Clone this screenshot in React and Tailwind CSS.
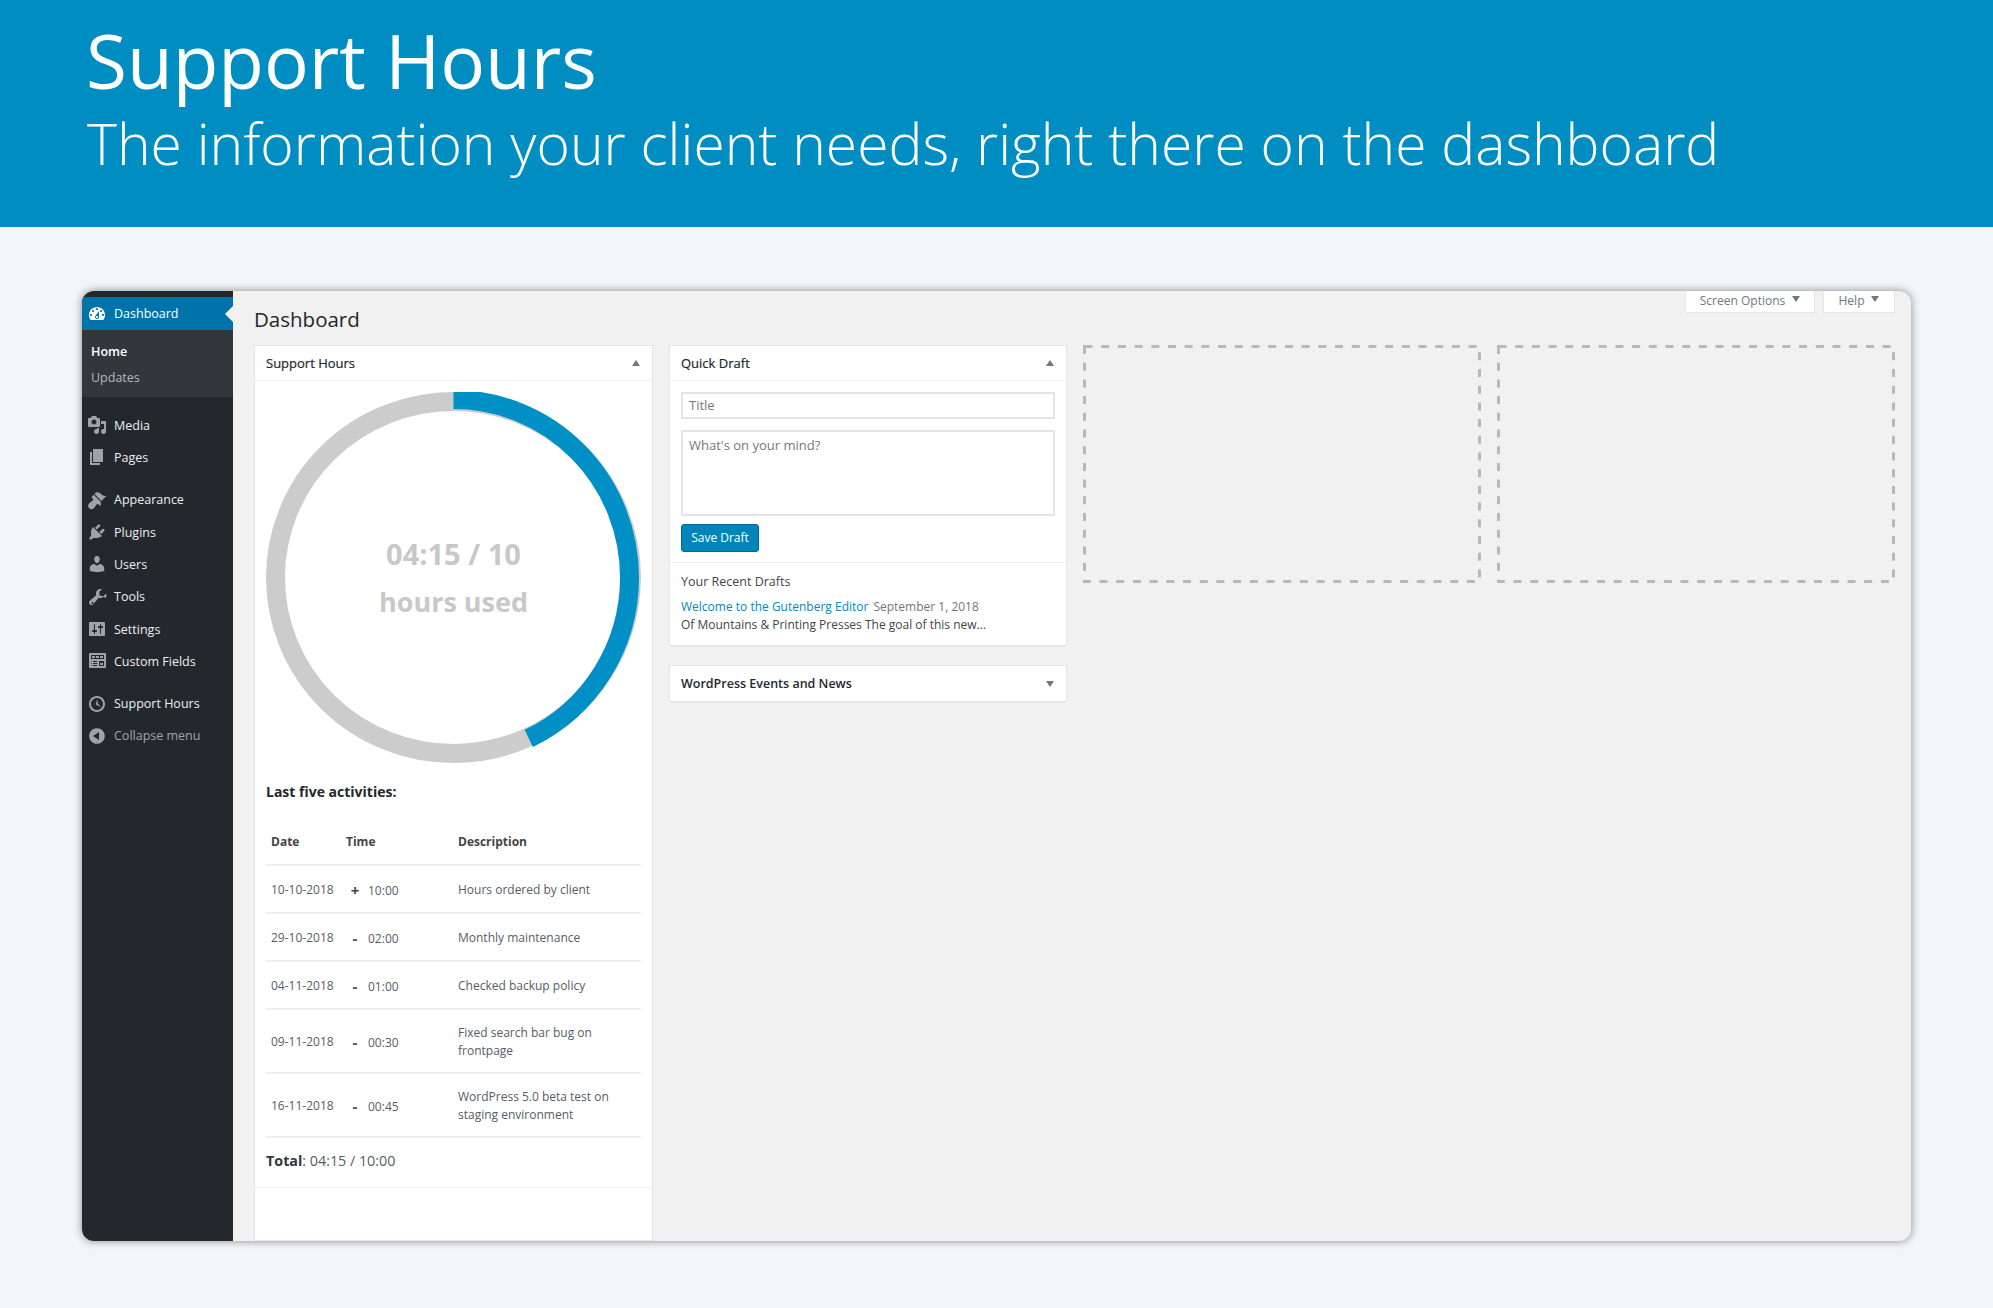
import React from 'react';

const menuIcons = {
    dashboard: 'M3.76 16h12.48c1.1-1.37 1.76-3.11 1.76-5 0-4.420-3.580-8-8-8s-8 3.580-8 8c0 1.890.66 3.630 1.760 5zM10 4c.55 0 1 .45 1 1s-.45 1-1 1-1-.45-1-1 .45-1 1-1zM6 6c.55 0 1 .45 1 1s-.45 1-1 1-1-.45-1-1 .45-1 1-1zm8 0c.55 0 1 .45 1 1s-.45 1-1 1-1-.45-1-1 .45-1 1-1zm-5.370 5.550L12 7v6c0 1.100-.9 2-2 2s-2-.9-2-2c0-.57.24-1.080.63-1.450zM4 10c.55 0 1 .45 1 1s-.45 1-1 1-1-.45-1-1 .45-1 1-1zm12 0c.55 0 1 .45 1 1s-.45 1-1 1-1-.45-1-1 .45-1 1-1zm-5 3c0-.55-.45-1-1-1s-1 .45-1 1 .45 1 1 1 1-.45 1-1z',
    media: 'M13 11V4c0-.55-.45-1-1-1h-1.670L9 1H5L3.670 3H2c-.55 0-1 .45-1 1v7c0 .55.45 1 1 1h10c.55 0 1-.45 1-1zM7 4.500c1.380 0 2.500 1.120 2.500 2.500S8.380 9.500 7 9.500 4.500 8.380 4.500 7 5.620 4.500 7 4.500zM14 6h5v10.500c0 1.380-1.120 2.500-2.500 2.500S14 17.880 14 16.500s1.120-2.500 2.500-2.500c.17 0 .34.020.5.050V9h-3V6zm-4 8.050V13h2v3.500c0 1.380-1.120 2.500-2.500 2.500S7 17.880 7 16.500 8.120 14 9.500 14c.17 0 .34.020.5.050z',
    pages: 'M6 15V2h10v13H6zm-1 1h8v2H3V5h2v11z',
    appearance: 'M14.480 11.060L7.410 3.990l1.500-1.500c.5-.56 2.300-.47 3.510.32 1.210.8 1.430 1.280 2.910 2.100 1.180.64 2.450 1.260 4.230.91zm-.71.710L6.700 4.700 4.930 6.470c-.39.390-.39 1.020 0 1.410l1.060 1.060c.39.390.39 1.030 0 1.420-.6.600-1.430 1.150-2.210 1.750-.59.450-1.190.9-1.700 1.400-1.290 1.290-1.290 3.390 0 4.680 1.290 1.290 3.390 1.290 4.680 0 .5-.51.950-1.110 1.400-1.700.6-.78 1.150-1.610 1.750-2.210.39-.39 1.030-.39 1.420 0l1.060 1.060c.39.390 1.020.39 1.410 0z',
    plugins: 'M13.110 4.360L9.870 7.600 8 5.730l3.240-3.240c.35-.34 1.050-.2 1.560.32.52.51.66 1.210.31 1.550zm-8 1.770l.91-1.120 9.010 9.010-1.190.84c-.71.710-2.630 1.160-3.820 1.160H6.140L4.900 17.260c-.59.59-1.540.59-2.120 0-.59-.58-.59-1.530 0-2.120l1.240-1.240v-3.880c0-1.130.4-3.190 1.090-3.890zm7.260 3.970l3.240-3.240c.34-.35 1.040-.21 1.550.31.52.51.66 1.210.31 1.550l-3.240 3.250z',
    users: 'M10 9.250c-2.270 0-2.730-3.440-2.730-3.440C7 4.020 7.820 2 9.970 2c2.160 0 2.980 2.020 2.710 3.810 0 0-.41 3.440-2.680 3.440zm0 2.570L12.720 10c2.390 0 4.520 2.330 4.520 4.530v2.490s-3.650 1.130-7.240 1.130c-3.650 0-7.240-1.130-7.240-1.130v-2.490c0-2.250 1.940-4.480 4.470-4.480z',
    tools: 'M16.680 9.770c-1.340 1.340-3.300 1.670-4.950.99l-5.410 6.520c-.99.990-2.590.99-3.570 0-.99-.98-.99-2.580 0-3.570l6.520-5.420c-.68-1.650-.35-3.610.99-4.950 1.280-1.280 3.120-1.640 4.720-1.100l-2.870 2.870.71 3.530 3.530.7 2.870-2.870c.54 1.600.18 3.440-1.100 4.720zM4.860 15.300c-.38.380-.38 1 0 1.380.38.380 1 .38 1.380 0 .38-.38.38-1 0-1.380-.38-.38-1-.38-1.380 0z',
    settings: 'M18 16V4c0-.55-.45-1-1-1H3c-.55 0-1 .45-1 1v12c0 .55.45 1 1 1h14c.55 0 1-.45 1-1zM8 11h1c.55 0 1 .45 1 1s-.45 1-1 1H8v1.500c0 .28-.22.5-.5.5s-.5-.22-.5-.5V13H6c-.55 0-1-.45-1-1s.45-1 1-1h1V5.500c0-.28.22-.5.5-.5s.5.22.5.5V11zm5-2h-1c-.55 0-1-.45-1-1s.45-1 1-1h1V5.500c0-.28.22-.5.5-.5s.5.22.5.5V7h1c.55 0 1 .45 1 1s-.45 1-1 1h-1v5.500c0 .28-.22.5-.5.5s-.5-.22-.5-.5V9z',
    fields: 'M19 16V3c0-.55-.45-1-1-1H3c-.55 0-1 .45-1 1v13c0 .55.45 1 1 1h15c.55 0 1-.45 1-1zM4 4h13v4H4V4zm1 1v2h3V5H5zm4 0v2h3V5H9zm4 0v2h3V5h-3zm-8.500 5c.28 0 .5.220.5.5s-.22.5-.5.5-.5-.22-.5-.5.22-.5.5-.5zM6 10h4v1H6v-1zm6 0h5v5h-5v-5zm-7.500 2c.28 0 .5.220.5.5s-.22.5-.5.5-.5-.22-.5-.5.22-.5.5-.5zM6 12h4v1H6v-1zm7 0v2h3v-2h-3zm-8.500 2c.28 0 .5.220.5.5s-.22.5-.5.5-.5-.22-.5-.5.22-.5.5-.5zM6 14h4v1H6v-1z',
    clock: 'M10 2c4.420 0 8 3.580 8 8s-3.580 8-8 8-8-3.580-8-8 3.580-8 8-8zm0 14c3.310 0 6-2.690 6-6s-2.690-6-6-6-6 2.690-6 6 2.690 6 6 6zm-.71-5.290c.07.050.14.100.23.150l-.02.020L14 13l-3.030-3.190L10 5l-.97 4.810h.01c0 .020-.01.050-.02.090S9 9.970 9 10c0 .28.100.52.29.71z',
    collapse: 'M10 2.160c4.330 0 7.840 3.510 7.840 7.840s-3.510 7.840-7.840 7.840S2.160 14.330 2.160 10 5.670 2.160 10 2.160zm2 11.840V6l-6 4z',
};

const MenuIcon = ({ name, light }) => (
    <svg viewBox="0 0 20 20" className={`w-5 h-5 shrink-0 ${light ? 'fill-white' : 'fill-[#9ea3a8] -mt-[2px]'}`}>
        <path d={menuIcons[name]} fillRule="evenodd" />
    </svg>
);

const MenuItem = ({ icon, label, muted, mt }) => (
    <div className={`flex items-center h-[32.300px] pl-[4px] gap-[7px] ${mt || ''}`}>
        <MenuIcon name={icon} />
        <span className={`text-[12.500px] ${muted ? 'text-[#a0a5aa]' : 'text-[#eeeeee]'}`}>{label}</span>
    </div>
);

const Arrow = ({ down, raised }) => (
    <span className={`w-0 h-0 border-x-[4px] border-x-transparent ${raised ? 'mb-[3px]' : ''} ${down ? 'border-t-[6px] border-t-[#72777c]' : 'border-b-[6px] border-b-[#72777c]'}`} />
);

const Widget = ({ title, down, bold, children }) => (
    <div className="bg-white border border-[#e5e5e5] shadow-[0_1px_1px_rgba(0,0,0,0.04)]">
        <div className={`h-[35px] pl-[11px] pr-[12px] flex items-center justify-between text-[#23282d] ${bold ? 'font-semibold text-[12.500px]' : 'text-[13px]'} ${down ? '' : 'border-b border-[#eeeeee]'}`}>
            <span className={`mt-[1px] ${bold ? '' : '[-webkit-text-stroke:0.2px]'}`}>{title}</span>
            <Arrow down={down} />
        </div>
        {children}
    </div>
);

const activities = [
    { date: '10-10-2018', sign: '+', time: '10:00', desc: ['Hours ordered by client'], h: 'h-[48px]' },
    { date: '29-10-2018', sign: '-', time: '02:00', desc: ['Monthly maintenance'], h: 'h-[48px]' },
    { date: '04-11-2018', sign: '-', time: '01:00', desc: ['Checked backup policy'], h: 'h-[48px]' },
    { date: '09-11-2018', sign: '-', time: '00:30', desc: ['Fixed search bar bug on', 'frontpage'], h: 'h-[64px]' },
    { date: '16-11-2018', sign: '-', time: '00:45', desc: ['WordPress 5.0 beta test on', 'staging environment'], h: 'h-[64px]' },
];

const ActivityRow = ({ row }) => (
    <div className={`flex items-center border-t-2 border-[#f0f0f0] text-[12px] text-[#555d66] pl-[5px] pt-[2px] ${row.h}`}>
        <span className="w-[71px]">{row.date}</span>
        <span className="w-[26px] text-center text-[15px] font-bold leading-none text-[#444444]">{row.sign}</span>
        <span className="w-[90px] mt-[1px]">{row.time}</span>
        <div className="leading-[18px]">
            {row.desc.map(line => <div key={line}>{line}</div>)}
        </div>
    </div>
);

const HoursRing = () => (
    <div className="relative w-[375px] h-[371px] mt-[11px]">
        <svg viewBox="0 0 375 371" className="w-full h-full">
            <ellipse cx="187.500" cy="185.500" rx="178" ry="176" fill="none" stroke="#cccccc" strokeWidth="19" />
            <ellipse
                cx="187.500"
                cy="185.500"
                rx="178"
                ry="176"
                fill="none"
                stroke="#0090c5"
                strokeWidth="19"
                pathLength="100"
                strokeDasharray="43 57"
                transform="rotate(-90 187.500 185.500)"
            />
        </svg>
        <div className="absolute inset-0 flex flex-col items-center justify-center text-[#c8c8c8] font-bold leading-[48px]">
            <span className="text-[29px]">04:15 / 10</span>
            <span className="text-[27px]">hours used</span>
        </div>
    </div>
);

// drop zone outlines: the dash length is longer than a css dashed border gives
const EmptyColumn = () => (
    <svg viewBox="0 0 398 238" className="w-full h-[238px]">
        <rect x="1.500" y="1.500" width="395" height="235" fill="none" stroke="#b4b9be" strokeWidth="3" strokeDasharray="8 8.700" />
    </svg>
);

export default function App() {
    return (
        <div className="w-[1993px] h-[1308px] overflow-hidden bg-[#f2f6f9] font-['Open_Sans',sans-serif]">
            <header className="h-[227px] bg-[#008ec2] text-white pl-[86px] pt-[15px]">
                <h1 className="text-[74.600px] leading-[90px]">Support Hours</h1>
                <p className="text-[57px] font-light leading-[76px] ml-[1px]">The information your client needs, right there on the dashboard</p>
            </header>

            <div className="mt-[64px] ml-[82px] w-[1829px] h-[950px] rounded-[12px] overflow-hidden flex bg-[#f1f1f1] shadow-[0_0_8px_rgba(0,0,0,0.45)]">
                <aside className="w-[151px] shrink-0 bg-[#23282d] pt-[6px]">
                    <div className="relative h-[33px] bg-[#0073aa] flex items-center pl-[5px] gap-[7px] text-[12.500px] text-white">
                        <MenuIcon name="dashboard" light />
                        <span className="mt-[1px]">Dashboard</span>
                        <span className="absolute right-0 top-[9px] w-0 h-0 border-y-[8px] border-y-transparent border-r-[8px] border-r-[#f1f1f1]" />
                    </div>
                    <div className="h-[67px] bg-[#32373c] pl-[9px] pt-[8px] text-[12.500px] leading-[27px]">
                        <div className="font-semibold text-white">Home</div>
                        <div className="text-[#b4b9be] -mt-[1px]">Updates</div>
                    </div>
                    <div className="pt-[13px] pl-[1px]">
                        <MenuItem icon="media" label="Media" />
                        <MenuItem icon="pages" label="Pages" />
                        <MenuItem icon="appearance" label="Appearance" mt="mt-[10px]" />
                        <MenuItem icon="plugins" label="Plugins" />
                        <MenuItem icon="users" label="Users" />
                        <MenuItem icon="tools" label="Tools" />
                        <MenuItem icon="settings" label="Settings" />
                        <MenuItem icon="fields" label="Custom Fields" />
                        <MenuItem icon="clock" label="Support Hours" mt="mt-[10px]" />
                        <MenuItem icon="collapse" label="Collapse menu" muted />
                    </div>
                </aside>

                <main className="relative flex-1 pl-[21px] pr-[16px]">
                    <div className="absolute right-[16px] top-0 flex gap-[8px] text-[12px] text-[#72777c]">
                        <div className="h-[22px] w-[130px] pb-[2px] bg-white border border-t-0 border-[#e5e5e5] flex items-center justify-center gap-[7px]">
                            <span>Screen Options</span>
                            <Arrow down raised />
                        </div>
                        <div className="h-[22px] w-[72px] pb-[2px] bg-white border border-t-0 border-[#e5e5e5] flex items-center justify-center gap-[7px]">
                            <span>Help</span>
                            <Arrow down raised />
                        </div>
                    </div>

                    <h2 className="text-[20.500px] text-[#23282d] leading-[29px] pt-[14px] h-[54px] box-border">Dashboard</h2>

                    <div className="grid grid-cols-[399px_398px_398px_398px] gap-[16px] h-[896px]">
                        <Widget title="Support Hours">
                            <div className="px-[11px]">
                                <HoursRing />
                                <div className="mt-[19px] text-[14px] font-bold text-[#23282d] leading-[20px]">Last five activities:</div>
                                <div className="flex items-center h-[62px] pt-[17px] pl-[5px] text-[12px] font-bold text-[#444444]">
                                    <span className="w-[75px]">Date</span>
                                    <span className="w-[112px]">Time</span>
                                    <span>Description</span>
                                </div>
                                {activities.map(row => <ActivityRow key={row.date} row={row} />)}
                                <div className="border-t-2 border-[#f0f0f0] h-[51px] pb-[3px] flex items-center text-[14.300px] text-[#555d66]">
                                    <span><b className="text-[#32373c]">Total</b>: 04:15 / 10:00</span>
                                </div>
                            </div>
                            <div className="border-t border-[#eeeeee]" />
                        </Widget>

                        <div className="flex flex-col gap-[19px] items-stretch self-start">
                            <Widget title="Quick Draft">
                                <div className="px-[11px] pt-[11px] pb-[10px] border-b border-[#eeeeee]">
                                    <div className="h-[27px] border-2 border-[#e4e4e4] flex items-center pl-[6px] text-[13px] text-[#72777c]">Title</div>
                                    <div className="h-[86px] mt-[11px] border-2 border-[#e4e4e4] pl-[6px] pt-[4px] text-[13px] text-[#72777c]">What's on your mind?</div>
                                    <button className="block mt-[8px] h-[28px] w-[78px] rounded-[3px] bg-[#0085ba] border border-[#006799] text-[12px] text-white">Save Draft</button>
                                </div>
                                <div className="px-[11px] pt-[10px] pb-[11px] text-[12px] leading-[18px] text-[#444444]">
                                    <div className="text-[12.500px]">Your Recent Drafts</div>
                                    <div className="mt-[7px]">
                                        <span className="text-[#0a85c2]">Welcome to the Gutenberg Editor</span>
                                        <span className="text-[#72777c] ml-[5px]">September 1, 2018</span>
                                    </div>
                                    <div>Of Mountains &amp; Printing Presses The goal of this new...</div>
                                </div>
                            </Widget>
                            <Widget title="WordPress Events and News" down bold />
                        </div>

                        <EmptyColumn />
                        <EmptyColumn />
                    </div>
                </main>
            </div>
        </div>
    );
}
